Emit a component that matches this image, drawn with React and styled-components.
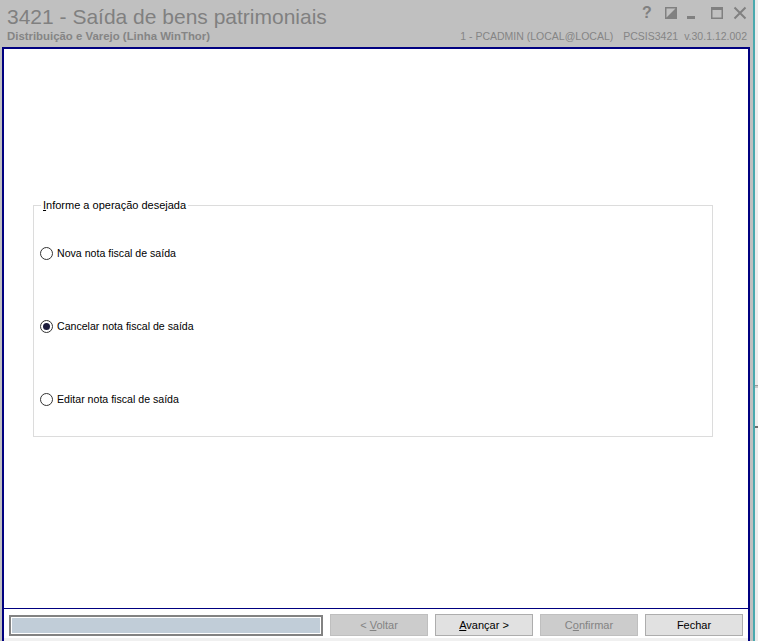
import React from 'react';
import styled, { createGlobalStyle } from 'styled-components';

const GlobalStyle = createGlobalStyle`
  html, body { margin: 0; padding: 0; background: #c0c0c0; }
  body { font-family: "Liberation Sans", Arial, sans-serif; }
  * { box-sizing: border-box; }
`;

const Screen = styled.div`
  width: 758px;
  height: 641px;
  display: flex;
  overflow: hidden;
  background: #c0c0c0;
`;

const Window = styled.div`
  width: 753px;
  display: flex;
  flex-direction: column;
  background: #c0c0c0;
`;

const Header = styled.header`
  height: 47px;
  flex: none;
  display: flex;
  justify-content: space-between;
  padding: 5px 6px 0 7px;
  color: #808080;
`;

const TitleBlock = styled.div`
  display: flex;
  flex-direction: column;
`;

const Title = styled.h1`
  margin: 0;
  font-size: 21px;
  line-height: 24px;
  font-weight: normal;
  color: #808080;
  white-space: nowrap;
`;

const Subtitle = styled.div`
  margin-top: 1px;
  font-size: 11.4px;
  line-height: 13px;
  font-weight: bold;
  color: #858585;
  white-space: nowrap;
`;

const HeaderRight = styled.div`
  display: flex;
  flex-direction: column;
  align-items: flex-end;
  padding-top: 1px;
`;

const WindowControls = styled.div`
  display: flex;
  align-items: center;
  gap: 9px;
  height: 13px;
`;

const HelpGlyph = styled.span`
  width: 14px;
  font-size: 16px;
  line-height: 13px;
  font-weight: bold;
  color: #808080;
  padding-left: 1px;
`;

const ControlIcon = styled.svg`
  width: 14px;
  height: 14px;
  display: block;
  color: #808080;
`;

const InfoRow = styled.div`
  margin-top: 11px;
  display: flex;
  font-size: 10.5px;
  line-height: 13px;
  color: #858585;
  white-space: nowrap;
`;

const InfoItem = styled.span`
  margin-left: ${(p) => p.$gap || 0}px;
`;

const Frame = styled.div`
  flex: 1;
  display: flex;
  flex-direction: column;
  margin-left: 2px;
  width: 748px;
  border: 2px solid #000080;
  border-bottom: none;
  background: #fff;
  min-height: 0;
`;

const Content = styled.main`
  flex: 1;
  border-bottom: 1px solid #000080;
  padding: 149px 35px 0 29px;
`;

const GroupBox = styled.fieldset`
  margin: 0;
  padding: 0 0 30px 0;
  border: 1px solid #dcdcdc;
  min-width: 0;
`;

const Legend = styled.legend`
  margin-left: 7px;
  padding: 0 2px;
  font-size: 11px;
  line-height: 14px;
  color: #000;
`;

const Options = styled.div`
  display: flex;
  flex-direction: column;
  gap: 59px;
  padding: 34px 0 0 6px;
`;

const OptionRow = styled.label`
  display: flex;
  align-items: center;
  gap: 4px;
  height: 14px;
  font-size: 10.6px;
  color: #000;
  white-space: nowrap;
`;

const RadioCircle = styled.span`
  width: 13px;
  height: 13px;
  border-radius: 50%;
  border: 1px solid #333;
  background: #fff;
  display: flex;
  align-items: center;
  justify-content: center;
  flex: none;
  &::after {
    content: '';
    width: 7px;
    height: 7px;
    border-radius: 50%;
    background: ${(p) => (p.$checked ? '#1c1c3c' : 'transparent')};
  }
`;

const Footer = styled.footer`
  height: 32px;
  flex: none;
  display: flex;
  align-items: flex-start;
  gap: 7px;
  padding: 5px 6px 0 5px;
  background: #fff;
  border-bottom: 3px solid #f0f0f0;
`;

const StatusBox = styled.div`
  width: 314px;
  height: 21px;
  margin-top: 1px;
  border: 2px solid #828282;
  box-shadow: inset 0 0 0 1px #fff;
  background: #c1cdd8;
  flex: none;
`;

const Button = styled.button`
  width: 98px;
  height: 22px;
  flex: none;
  padding: 0;
  font-family: "Liberation Sans", Arial, sans-serif;
  font-size: 11px;
  border: 1px solid ${(p) => (p.disabled ? '#bfbfbf' : '#adadad')};
  background: ${(p) => (p.disabled ? '#cccccc' : '#e1e1e1')};
  color: ${(p) => (p.disabled ? '#838383' : '#000')};
`;

const U = styled.span`
  text-decoration: underline;
`;

const Behind = styled.div`
  flex: 1;
  border-left: 2px solid #4aa9ae;
  background: #ececec;
  display: flex;
  flex-direction: column;
  padding-top: 385px;
`;

const Grip = styled.div`
  height: 43px;
  border-top: 1px solid #9a9a9a;
  border-bottom: 2px solid #6d6d6d;
  background: #f0f0f0;
  box-shadow: inset 0 2px 0 #c8c8c8;
`;

const options = [
  { label: 'Nova nota fiscal de saída', checked: false },
  { label: 'Cancelar nota fiscal de saída', checked: true },
  { label: 'Editar nota fiscal de saída', checked: false },
];

export default function App() {
  return (
    <>
      <GlobalStyle />
      <Screen>
        <Window>
          <Header>
            <TitleBlock>
              <Title>3421 - Saída de bens patrimoniais</Title>
              <Subtitle>Distribuição e Varejo (Linha WinThor)</Subtitle>
            </TitleBlock>
            <HeaderRight>
              <WindowControls>
                <HelpGlyph>?</HelpGlyph>
                <ControlIcon viewBox="0 0 14 14">
                  <rect x="1.75" y="1.75" width="10.5" height="10.5" fill="none" stroke="currentColor" strokeWidth="1.5" />
                  <polygon points="1,13 13,1 13,13" fill="currentColor" />
                </ControlIcon>
                <ControlIcon viewBox="0 0 14 14">
                  <rect x="0" y="10" width="8" height="3" fill="currentColor" />
                </ControlIcon>
                <ControlIcon viewBox="0 0 14 14">
                  <rect x="1.75" y="1.75" width="10.5" height="10.5" fill="none" stroke="currentColor" strokeWidth="1.5" />
                  <rect x="1" y="1" width="12" height="3" fill="currentColor" />
                </ControlIcon>
                <ControlIcon viewBox="0 0 14 14">
                  <path d="M1.5 1.5 L12.5 12.5 M12.5 1.5 L1.5 12.5" stroke="currentColor" strokeWidth="2" fill="none" />
                </ControlIcon>
              </WindowControls>
              <InfoRow>
                <InfoItem>1 - PCADMIN (LOCAL@LOCAL)</InfoItem>
                <InfoItem $gap={10}>PCSIS3421</InfoItem>
                <InfoItem $gap={6}>v.30.1.12.002</InfoItem>
              </InfoRow>
            </HeaderRight>
          </Header>
          <Frame>
            <Content>
              <GroupBox>
                <Legend>
                  <U>I</U>nforme a operação desejada
                </Legend>
                <Options>
                  {options.map((o) => (
                    <OptionRow key={o.label}>
                      <RadioCircle $checked={o.checked} />
                      {o.label}
                    </OptionRow>
                  ))}
                </Options>
              </GroupBox>
            </Content>
            <Footer>
              <StatusBox />
              <Button disabled>
                &lt; <U>V</U>oltar
              </Button>
              <Button>
                <U>A</U>vançar &gt;
              </Button>
              <Button disabled>
                C<U>o</U>nfirmar
              </Button>
              <Button>Fechar</Button>
            </Footer>
          </Frame>
        </Window>
        <Behind>
          <Grip />
        </Behind>
      </Screen>
    </>
  );
}
